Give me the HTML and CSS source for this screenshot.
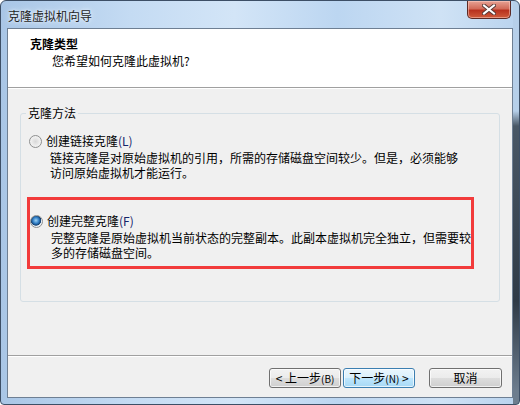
FILE: index.html
```html
<!DOCTYPE html>
<html>
  <head>
    <meta charset="utf-8" />
    <title>克隆虚拟机向导</title>
    <link rel="stylesheet" href="styles.css">
  </head>

  <body>
    <!-- 窗口 -->
    <div class="window">
      <!-- 标题栏 -->
      <div class="titlebar">
        <span class="title">克隆虚拟机向导</span>
        <button class="close-btn" aria-label="关闭">
          <svg width="14" height="11" viewBox="0 0 14 11">
            <path d="M2 1.5 L12 9.5 M12 1.5 L2 9.5" stroke="#5a3a36" stroke-width="4" stroke-linecap="square" />
            <path d="M2 1.5 L12 9.5 M12 1.5 L2 9.5" stroke="#fff" stroke-width="2" stroke-linecap="square" />
          </svg>
        </button>
      </div>

      <!-- 客户区 -->
      <div class="client">
        <div class="header">
          <div class="header-title">克隆类型</div>
          <div class="header-sub">您希望如何克隆此虚拟机?</div>
        </div>

        <div class="content">
          <fieldset class="group">
            <legend>克隆方法</legend>
            <div class="group-body">
              <div class="option">
                <label class="option-label">
                  <span class="radio"></span>
                  <span>创建链接克隆<span class="key">(L)</span></span>
                </label>
                <div class="option-desc">
                  链接克隆是对原始虚拟机的引用，所需的存储磁盘空间较少。但是，必须能够<br>访问原始虚拟机才能运行。
                </div>
              </div>

              <!-- 红框标注 -->
              <div class="option option-marked">
                <label class="option-label">
                  <span class="radio checked"></span>
                  <span>创建完整克隆<span class="key">(F)</span></span>
                </label>
                <div class="option-desc">
                  完整克隆是原始虚拟机当前状态的完整副本。此副本虚拟机完全独立，但需要较<br>多的存储磁盘空间。
                </div>
              </div>
            </div>
          </fieldset>
        </div>

        <!-- 底部按钮 -->
        <div class="footer">
          <button class="btn">&lt; 上一步<span class="small">(B)</span></button>
          <button class="btn btn-focus">下一步<span class="small">(N)</span> &gt;</button>
          <button class="btn btn-cancel">取消</button>
        </div>
      </div>
    </div>
  </body>
</html>
```

FILE: styles.css
```css
/* 基础样式 */
html,
body {
  margin: 0;
  padding: 0;
  background: #ffffff;
  font-family: "Noto Sans CJK SC", "DejaVu Sans", sans-serif;
  font-size: 12px;
  color: #000;
}

/* 窗口外框 (Aero 玻璃效果) */
.window {
  box-sizing: border-box;
  width: 520px;
  height: 405px;
  border: 1px solid #3d4f66;
  border-radius: 6px 6px 4px 4px;
  padding: 0 6px 6px 6px;
  display: flex;
  flex-direction: column;
  background:
    linear-gradient(to bottom, #b6cfe9 0, #b6cfe9 110px, #4a5866 125px, #2f3a46 300px, #6d7d8e 390px) right top / 6px 100% no-repeat,
    linear-gradient(to right, #a9c6e6 0, #c4dbf3 25%, #d3e5f7 45%, #bcd6f1 65%, #cfe2f5 85%, #b9d3ee 100%);
}

/* 标题栏 */
.titlebar {
  height: 27px;
  display: flex;
  justify-content: space-between;
  align-items: flex-start;
}
.title {
  padding: 7px 0 0 1px;
  line-height: 16px;
  color: #1e1e1e;
  text-shadow: 0 0 6px #e8f2fc, 0 0 3px #f2f8fe;
}
.close-btn {
  width: 44px;
  height: 18px;
  margin-right: 2px;
  padding: 0;
  border: 1px solid #5c2a25;
  border-top: none;
  border-radius: 0 0 5px 5px;
  background: linear-gradient(to bottom, #e7a294 0, #d26b59 45%, #b8321f 55%, #cf5b3b 100%);
  box-shadow: inset 0 0 0 1px rgba(255, 210, 200, 0.5);
  display: flex;
  align-items: center;
  justify-content: center;
}

/* 客户区 */
.client {
  flex: 1;
  display: flex;
  flex-direction: column;
  border: 1px solid #6e7f93;
  background: #f0f0f0;
}

.header {
  height: 59px;
  background: #fff;
  border-bottom: 1px solid #a0a0a0;
  padding: 0 0 0 22px;
  box-sizing: border-box;
  line-height: 14px;
}
.header-title {
  font-weight: bold;
  padding-top: 8px;
}
.header-sub {
  margin-top: 3px;
  padding-left: 22px;
}

.content {
  flex: 1;
  border-top: 1px solid #fff;
  padding: 17px 12px 0 12px;
}

/* 分组框 */
.group {
  margin: 0;
  padding: 0;
  border: 1px solid #d5dfe5;
  border-radius: 3px;
  height: 196px;
  box-sizing: border-box;
}
.group legend {
  margin-left: 5px;
  padding: 0 2px;
  line-height: 14px;
}
.group-body {
  padding: 14px 0 0 8px;
}

.option-label {
  display: flex;
  align-items: center;
  gap: 4px;
  line-height: 14px;
}
.key {
  color: #14246a;
}
.option-desc {
  margin-top: 2px;
  padding-left: 21px;
  line-height: 15px;
  white-space: nowrap;
}

/* 单选按钮 */
.radio {
  width: 11px;
  height: 11px;
  border-radius: 50%;
  border: 1px solid #8e8f8f;
  background: radial-gradient(circle at 50% 50%, #d8d8d8 0, #eeeeee 55%, #f6f6f6 100%);
  flex: none;
}
.radio.checked {
  background: radial-gradient(circle at 45% 40%, #9dd3f5 0, #2e7cc4 35%, #15406f 55%, #e9eef3 62%, #f4f4f4 100%);
}

/* 红框标注 */
.option-marked {
  width: 441px;
  margin: 17px 0 0 -2px;
  padding: 14px 0 6px 0;
  border: 3px solid #f23b3b;
}

/* 底部 */
.footer {
  height: 42px;
  box-sizing: border-box;
  border-top: 1px solid #a0a0a0;
  box-shadow: inset 0 1px 0 #fff;
  display: flex;
  justify-content: flex-end;
  align-items: flex-start;
  padding: 12px 10px 0 0;
  gap: 2px;
}

.btn {
  width: 72px;
  height: 20px;
  padding: 0;
  font-family: "Noto Sans CJK SC", "DejaVu Sans", sans-serif;
  font-size: 12px;
  line-height: 16px;
  color: #000;
  border: 1px solid #707070;
  border-radius: 3px;
  background: linear-gradient(to bottom, #f2f2f2 0, #ebebeb 50%, #dddddd 51%, #cfcfcf 100%);
  box-shadow: inset 0 0 0 1px rgba(255, 255, 255, 0.7);
}
.btn .small {
  font-size: 10px;
}
.btn-focus {
  border-color: #3c7fb1;
  background: linear-gradient(to bottom, #eaf6fd 0, #d9f0fc 50%, #bee6fd 51%, #a7d9f5 100%);
}
.btn-cancel {
  width: 73px;
  margin-left: 12px;
}
```
